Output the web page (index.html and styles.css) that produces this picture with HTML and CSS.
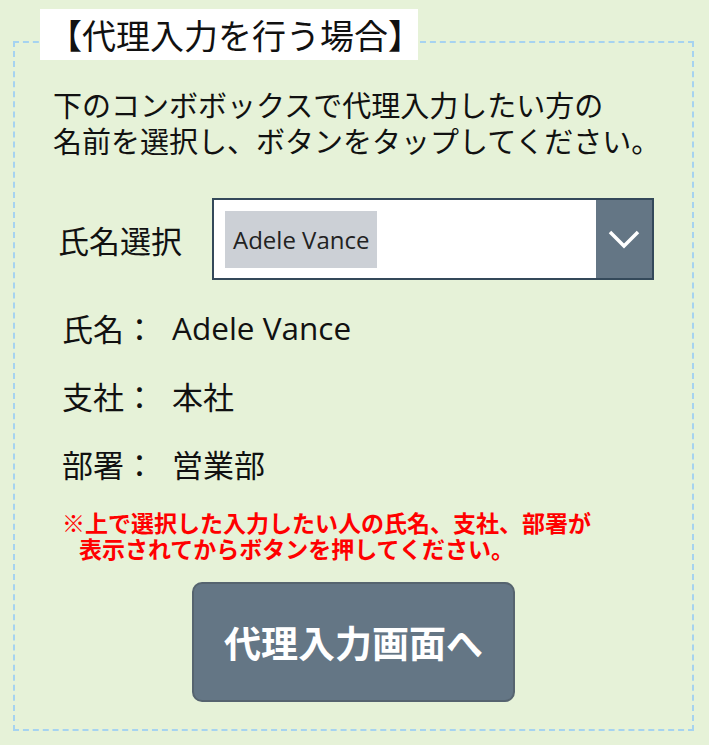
FILE: index.html
```html
<!DOCTYPE html>
<html lang="ja">
<head>
    <meta charset="UTF-8">
    <meta name="viewport" content="width=device-width, initial-scale=1.0">
    <title>代理入力</title>
    <link rel="stylesheet" href="styles.css">
</head>
<body>
    <div class="frame">
        <div class="title">【代理入力を行う場合】</div>

        <div class="guide">
            <p>下のコンボボックスで代理入力したい方の</p>
            <p>名前を選択し、ボタンをタップしてください。</p>
        </div>

        <!-- 氏名選択 -->
        <div class="pick">
            <span class="pick-label">氏名選択</span>
            <div class="combo">
                <div class="combo-field">
                    <span class="chip">Adele Vance</span>
                </div>
                <div class="combo-btn">
                    <svg width="34" height="20" viewBox="0 0 34 20">
                        <polyline points="3,3 17,17 31,3" fill="none" stroke="#fff" stroke-width="3.5"/>
                    </svg>
                </div>
            </div>
        </div>

        <div class="info">
            <div class="row"><span class="key">氏名：</span><span class="val latin">Adele Vance</span></div>
            <div class="row"><span class="key">支社：</span><span class="val">本社</span></div>
            <div class="row"><span class="key">部署：</span><span class="val">営業部</span></div>
        </div>

        <div class="note">
            <p>※上で選択した入力したい人の氏名、支社、部署が</p>
            <p class="note-indent">表示されてからボタンを押してください。</p>
        </div>

        <div class="actions">
            <button class="go">代理入力画面へ</button>
        </div>
    </div>
</body>
</html>
```
FILE: styles.css
```css
body {
    margin: 0;
    background: #e6f2d8;
    font-family: "Noto Sans CJK JP", "Noto Sans", sans-serif;
    color: #111;
    width: 709px;
    height: 745px;
    overflow: hidden;
}
.frame {
    position: relative;
    box-sizing: border-box;
    margin: 41px 0 0 13px;
    width: 681px;
    height: 690px;
    border: 2px dashed #a6d3f0;
    padding-top: 43px;
}
.title {
    position: absolute;
    left: 25px;
    top: -34px;
    width: 378px;
    height: 51px;
    background: #fff;
    font-size: 34px;
    line-height: 51px;
    box-sizing: border-box;
    padding-left: 8px;
    white-space: nowrap;
}
.guide {
    margin-left: 38px;
    font-size: 29px;
}
.guide p {
    margin: 0;
    height: 36px;
    line-height: 36px;
    white-space: nowrap;
}
.pick {
    display: flex;
    align-items: center;
    margin-top: 40px;
    padding-left: 43px;
}
.pick-label {
    width: 154px;
    font-size: 31px;
}
.combo {
    display: flex;
    box-sizing: border-box;
    width: 442px;
    height: 82px;
    border: 2px solid #34495a;
    background: #fff;
}
.combo-field {
    flex: 1;
    display: flex;
    align-items: center;
    padding-left: 11px;
}
.chip {
    background: #ccd0d6;
    font-family: "Open Sans", "Noto Sans", sans-serif;
    font-size: 24px;
    height: 57px;
    line-height: 57px;
    padding: 0 8px;
    color: #222;
}
.combo-btn {
    width: 56px;
    background: #647685;
    display: flex;
    align-items: center;
    justify-content: center;
}
.info {
    display: flex;
    flex-direction: column;
    gap: 28px;
    margin-top: 27px;
    padding-left: 47px;
}
.row {
    display: flex;
    height: 40px;
    align-items: center;
    font-size: 31px;
}
.key {
    width: 110px;
}
.latin {
    font-family: "Open Sans", "Noto Sans", sans-serif;
    font-size: 31.5px;
}
.note {
    margin: 26px 0 0 47px;
    color: #ff0000;
    font-weight: bold;
    font-size: 23px;
}
.note p {
    margin: 0;
    height: 26px;
    line-height: 26px;
    white-space: nowrap;
}
.note-indent {
    padding-left: 17px;
}
.actions {
    display: flex;
    justify-content: center;
    margin-top: 21px;
}
.go {
    width: 323px;
    height: 120px;
    background: #647685;
    border: 2px solid #56646f;
    border-radius: 10px;
    color: #fff;
    font-family: "Noto Sans CJK JP", sans-serif;
    font-weight: bold;
    font-size: 37px;
}
```
